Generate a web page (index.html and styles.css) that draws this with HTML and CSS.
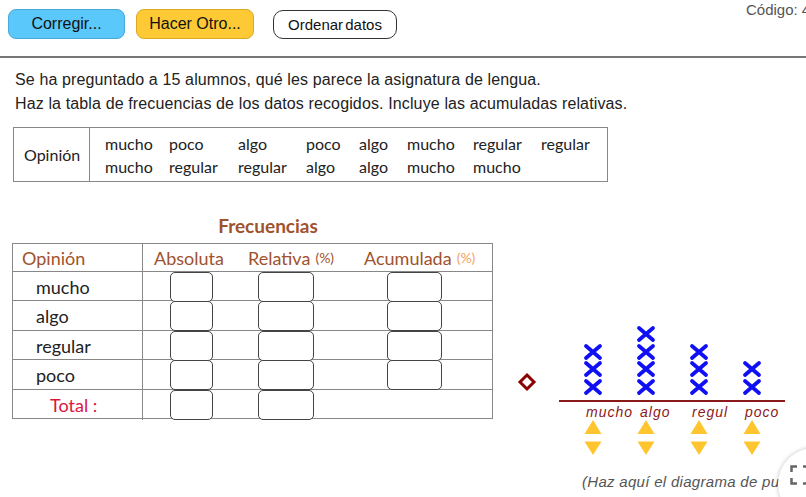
FILE: index.html
```html
<!DOCTYPE html>
<html lang="es">
<head>
    <meta charset="UTF-8">
    <title>Tabla de frecuencias</title>
    <link rel="stylesheet" href="styles.css">
</head>
<body>
    <div class="toolbar">
        <button class="btn btn-check">Corregir...</button>
        <button class="btn btn-new">Hacer Otro...</button>
        <button class="btn btn-sort">Ordenar datos</button>
        <span class="code">Código: 4</span>
    </div>

    <div class="content">
        <p class="statement">Se ha preguntado a 15 alumnos, qué les parece la asignatura de lengua.</p>
        <p class="statement">Haz la tabla de frecuencias de los datos recogidos. Incluye las acumuladas relativas.</p>

        <!-- datos recogidos -->
        <div class="data-table">
            <div class="data-head">Opinión</div>
            <div class="data-values">
                <span>mucho</span><span>poco</span><span>algo</span><span>poco</span>
                <span>algo</span><span>mucho</span><span>regular</span><span>regular</span>
                <span>mucho</span><span>regular</span><span>regular</span><span>algo</span>
                <span>algo</span><span>mucho</span><span>mucho</span>
            </div>
        </div>

        <div class="lower">
            <div class="freq">
                <h3 class="freq-title">Frecuencias</h3>
                <div class="freq-table">
                    <div class="freq-row freq-head">
                        <div class="cell cell-label">Opinión</div>
                        <div class="cell cell-abs">Absoluta</div>
                        <div class="cell cell-rel">Relativa<small>(%)</small></div>
                        <div class="cell cell-acu">Acumulada<small class="pct-light">(%)</small></div>
                    </div>
                    <div class="freq-row">
                        <div class="cell cell-label">mucho</div>
                        <div class="cell cell-abs"><span class="box box-abs"></span></div>
                        <div class="cell cell-rel"><span class="box box-rel"></span></div>
                        <div class="cell cell-acu"><span class="box box-acu"></span></div>
                    </div>
                    <div class="freq-row">
                        <div class="cell cell-label">algo</div>
                        <div class="cell cell-abs"><span class="box box-abs"></span></div>
                        <div class="cell cell-rel"><span class="box box-rel"></span></div>
                        <div class="cell cell-acu"><span class="box box-acu"></span></div>
                    </div>
                    <div class="freq-row">
                        <div class="cell cell-label">regular</div>
                        <div class="cell cell-abs"><span class="box box-abs"></span></div>
                        <div class="cell cell-rel"><span class="box box-rel"></span></div>
                        <div class="cell cell-acu"><span class="box box-acu"></span></div>
                    </div>
                    <div class="freq-row">
                        <div class="cell cell-label">poco</div>
                        <div class="cell cell-abs"><span class="box box-abs"></span></div>
                        <div class="cell cell-rel"><span class="box box-rel"></span></div>
                        <div class="cell cell-acu"><span class="box box-acu"></span></div>
                    </div>
                    <div class="freq-row">
                        <div class="cell cell-label total">Total :</div>
                        <div class="cell cell-abs"><span class="box box-abs"></span></div>
                        <div class="cell cell-rel"><span class="box box-rel"></span></div>
                        <div class="cell cell-acu"></div>
                    </div>
                </div>
            </div>

            <!-- diagrama de puntos (coordenadas de página) -->
            <svg class="dot-plot" width="296" height="187" viewBox="510 310 296 187">
                <defs>
                    <path id="mark" d="M-7 -6 L7 6 M7 -6 L-7 6" />
                    <path id="up" d="M0 -7 L8.5 7 L-8.5 7 Z" />
                    <path id="down" d="M0 7 L8.5 -6.5 L-8.5 -6.5 Z" />
                </defs>

                <polygon class="handle" points="527,375 534,382 527,389 520,382" />
                <line class="axis" x1="559" y1="401" x2="785" y2="401" />

                <g class="marks">
                    <use href="#mark" x="593" y="352" />
                    <use href="#mark" x="593" y="369" />
                    <use href="#mark" x="593" y="387" />
                    <use href="#mark" x="646" y="334" />
                    <use href="#mark" x="646" y="352" />
                    <use href="#mark" x="646" y="369" />
                    <use href="#mark" x="646" y="387" />
                    <use href="#mark" x="699" y="352" />
                    <use href="#mark" x="699" y="369" />
                    <use href="#mark" x="699" y="387" />
                    <use href="#mark" x="752" y="369" />
                    <use href="#mark" x="752" y="387" />
                </g>

                <g class="labels">
                    <text x="586" y="417">mucho</text>
                    <text x="640" y="417">algo</text>
                    <text x="692" y="417">regul</text>
                    <text x="745" y="417">poco</text>
                </g>

                <g class="arrows">
                    <use href="#up" x="593" y="427" />
                    <use href="#up" x="646" y="427" />
                    <use href="#up" x="699" y="427" />
                    <use href="#up" x="752" y="427" />
                    <use href="#down" x="593" y="448" />
                    <use href="#down" x="646" y="448" />
                    <use href="#down" x="699" y="448" />
                    <use href="#down" x="752" y="448" />
                </g>

                <text class="hint" x="582" y="487">(Haz aquí el diagrama de puntos)</text>
            </svg>
        </div>
    </div>

    <button class="fullscreen">
        <svg width="20" height="20" viewBox="0 0 20 20">
            <path d="M1.5 7 V1.5 H7 M13 1.5 H18.5 V7 M18.5 13 V18.5 H13 M7 18.5 H1.5 V13" />
        </svg>
    </button>
</body>
</html>
```

FILE: styles.css
```css
* {
    margin: 0;
    padding: 0;
    box-sizing: border-box;
}

body {
    width: 806px;
    height: 497px;
    overflow: hidden;
    position: relative;
    background: white;
    font-family: "Liberation Sans", Arial, sans-serif;
    color: #222;
}

.toolbar {
    display: flex;
    align-items: flex-start;
    height: 58px;
    padding-left: 8px;
    border-bottom: 2px solid #777;
}

.btn {
    flex-shrink: 0;
    margin-top: 9px;
    height: 30px;
    font-family: "Liberation Sans", Arial, sans-serif;
    font-size: 16px;
    color: #111;
    border-radius: 8px;
    cursor: pointer;
}

.btn-check {
    width: 117px;
    background-color: #5ac8fa;
    border: 1px solid #49a9d9;
}

.btn-new {
    width: 118px;
    margin-left: 11px;
    background-color: #fdca35;
    border: 1px solid #d9a824;
}

.btn-sort {
    width: 124px;
    height: 29px;
    margin-top: 10px;
    margin-left: 19px;
    font-size: 15px;
    word-spacing: -2px;
    background-color: white;
    border: 1.5px solid #333;
    border-radius: 10px;
}

.code {
    flex-shrink: 0;
    white-space: nowrap;
    margin-left: 349px;
    margin-top: 1px;
    font-size: 15px;
    line-height: 18px;
    color: #555;
}

.content {
    padding-left: 13px;
}

.statement {
    padding-left: 2px;
    font-size: 16px;
    line-height: 24px;
    letter-spacing: 0.13px;
}

.statement:first-child {
    margin-top: 10px;
}

/* tabla de datos */
.data-table {
    display: flex;
    width: 595px;
    height: 55px;
    margin-top: 11px;
    border: 1px solid #888;
    font-family: Lato, "Open Sans", sans-serif;
    font-size: 16px;
    color: #222;
}

.data-head {
    display: flex;
    align-items: center;
    width: 76px;
    padding-left: 10px;
    border-right: 1px solid #888;
}

.data-values {
    display: grid;
    grid-template-columns: 64px 69px 68px 53px 48px 66px 68px auto;
    grid-auto-rows: 23px;
    align-items: center;
    padding-top: 4px;
    padding-left: 15px;
}

/* frecuencias */
.lower {
    display: flex;
    align-items: flex-start;
    margin-top: 33px;
    margin-left: -1px;
}

.freq {
    width: 481px;
    flex-shrink: 0;
    font-family: Lato, "Open Sans", sans-serif;
}

.freq-title {
    padding-left: 31px;
    text-align: center;
    font-size: 19px;
    line-height: 22px;
    font-weight: bold;
    color: #a0522d;
}

.freq-table {
    margin-top: 6px;
    border: 1px solid #888;
}

.freq-row {
    display: grid;
    grid-template-columns: 130px 97px 110px 1fr;
    height: 29.4px;
    border-top: 1px solid #888;
    font-size: 18px;
}

.freq-head {
    height: 27px;
    border-top: none;
    color: #a0522d;
}

.freq-head small {
    margin-left: 5px;
    font-size: 14px;
}

.freq-head .pct-light {
    color: #f4a460;
}

.cell {
    display: flex;
    align-items: center;
    white-space: nowrap;
}

.cell-label {
    padding-left: 23px;
    border-right: 1px solid #888;
}

.freq-head .cell-label {
    padding-left: 9px;
}

.freq-head .cell-abs {
    padding-left: 11px;
}

.freq-head .cell-rel {
    padding-left: 8px;
}

.freq-head .cell-acu {
    padding-left: 14px;
}

.total {
    padding-left: 37px;
    color: #dc143c;
}

.box {
    display: block;
    height: 30px;
    flex-shrink: 0;
    background: white;
    border: 1.5px solid #444;
    border-radius: 5px;
}

.box-abs {
    width: 43px;
    margin-left: 27px;
}

.box-rel {
    width: 56px;
    margin-left: 18px;
}

.box-acu {
    width: 55px;
    margin-left: 37px;
}

/* diagrama */
.dot-plot {
    flex-shrink: 0;
    margin-top: 95px;
    margin-left: 17px;
    overflow: visible;
}

.handle {
    fill: white;
    stroke: #8b0000;
    stroke-width: 3;
}

.axis {
    stroke: #8b1a1a;
    stroke-width: 2;
}

.marks use {
    fill: none;
    stroke: #1010f5;
    stroke-width: 3.8;
    stroke-linecap: round;
}

.labels text {
    font-family: "Liberation Sans", Arial, sans-serif;
    font-style: italic;
    font-size: 14px;
    letter-spacing: 1px;
    fill: #8b1a1a;
}

.arrows use {
    fill: #ffc52e;
}

.hint {
    font-family: "Liberation Sans", Arial, sans-serif;
    font-style: italic;
    font-size: 15px;
    letter-spacing: 0.3px;
    fill: #555;
}

.fullscreen {
    position: absolute;
    left: 778px;
    top: 448px;
    display: flex;
    align-items: flex-start;
    width: 72px;
    height: 72px;
    padding: 17px 0 0 12px;
    background: white;
    border: none;
    border-radius: 50%;
    box-shadow: 0 0 4px rgba(0, 0, 0, 0.25);
}

.fullscreen svg {
    display: block;
    fill: none;
    stroke: #666;
    stroke-width: 2.5;
}
```
